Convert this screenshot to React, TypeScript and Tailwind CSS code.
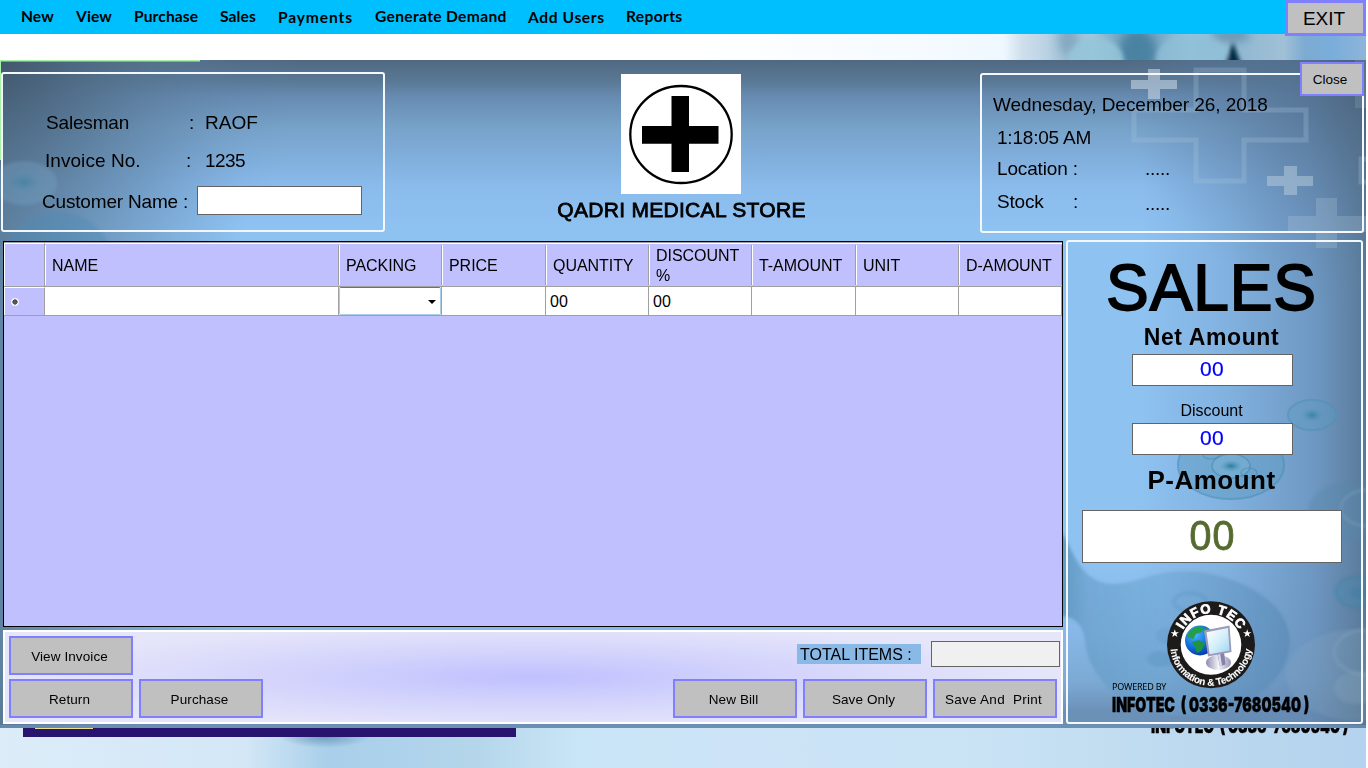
import React from "react";

const MENU = [
  { label: "New", cls: "w-[55px]" },
  { label: "View", cls: "w-[58px]" },
  { label: "Purchase", cls: "w-[86px]" },
  { label: "Sales", cls: "w-[58px]" },
  { label: "Payments", cls: "w-[97px] pt-px tracking-[0.85px]" },
  { label: "Generate Demand", cls: "w-[153px] tracking-[0.33px]" },
  { label: "Add Users", cls: "w-[98px] pt-px tracking-[0.6px]" },
  { label: "Reports", cls: "w-[90px] tracking-[0.35px]" },
];

const COLUMNS = [
  { label: "NAME", width: "w-[294px]", value: "" },
  { label: "PACKING", width: "w-[103px]", value: "", combo: true },
  { label: "PRICE", width: "w-[104px]", value: "" },
  { label: "QUANTITY", width: "w-[103px]", value: "00" },
  { label: "DISCOUNT %", width: "w-[103px]", value: "00" },
  { label: "T-AMOUNT", width: "w-[104px]", value: "" },
  { label: "UNIT", width: "w-[103px]", value: "" },
  { label: "D-AMOUNT", width: "w-[103px]", value: "" },
];

function Btn({ children, className = "" }: { children: React.ReactNode; className?: string }) {
  return (
    <button
      className={`flex h-[39px] w-[124px] shrink-0 items-center justify-center whitespace-pre border-2 border-[#8080ff] bg-[#c0c0c0] pt-[3px] pr-[3px] text-[13.5px] leading-none tracking-[0.1px] text-black ${className}`}
    >
      {children}
    </button>
  );
}

function PhotoStrip() {
  return (
    <svg className="block h-[26px] w-full" viewBox="0 0 1366 26" preserveAspectRatio="none">
      <defs>
        <linearGradient id="strip" x1="0" x2="1">
          <stop offset="0" stopColor="#ffffff" />
          <stop offset="0.5" stopColor="#ffffff" />
          <stop offset="0.7" stopColor="#f3faff" />
          <stop offset="0.735" stopColor="#eef8fe" />
          <stop offset="0.748" stopColor="#cfdfec" />
          <stop offset="0.765" stopColor="#bcd3e5" />
          <stop offset="0.78" stopColor="#9dbdd2" />
          <stop offset="0.8" stopColor="#a4c6da" />
          <stop offset="0.822" stopColor="#6f9fbc" />
          <stop offset="0.845" stopColor="#74a3c0" />
          <stop offset="0.87" stopColor="#9cc6dc" />
          <stop offset="0.91" stopColor="#92b9d2" />
          <stop offset="0.94" stopColor="#a0c0d6" />
          <stop offset="0.955" stopColor="#7cabd2" />
          <stop offset="0.975" stopColor="#79addb" />
          <stop offset="1" stopColor="#8fb4d8" />
        </linearGradient>
        <filter id="soft"><feGaussianBlur stdDeviation="4" /></filter>
        <filter id="soft2"><feGaussianBlur stdDeviation="2" /></filter>
      </defs>
      <rect width="1366" height="26" fill="url(#strip)" />
      <g filter="url(#soft)">
        <ellipse cx="1068" cy="6" rx="10" ry="14" fill="#6b95b2" opacity="0.5" />
        <ellipse cx="1138" cy="18" rx="18" ry="22" fill="#3e7899" opacity="0.75" />
        <ellipse cx="1230" cy="2" rx="20" ry="6" fill="#3f6c8c" opacity="0.5" />
      </g>
      <g filter="url(#soft2)">
        <ellipse cx="1096" cy="28" rx="28" ry="24" fill="#94c5d9" opacity="0.85" />
        <ellipse cx="1192" cy="26" rx="36" ry="27" fill="#8dbfd7" opacity="0.8" />
        <path d="M1233 8 L1241 30 L1225 30 Z" fill="#052f45" />
      </g>
    </svg>
  );
}

function Cell({ cx, cy, rx, ry }: { cx: number; cy: number; rx: number; ry: number }) {
  return (
    <g filter="url(#b1)">
      <ellipse cx={cx} cy={cy} rx={rx} ry={ry} fill="#5d9cc0" opacity="0.35" />
      <ellipse cx={cx} cy={cy} rx={rx - 1} ry={ry - 1} fill="none" stroke="#4b8cb0" strokeWidth="2" opacity="0.4" />
      <ellipse cx={cx} cy={cy} rx={rx * 0.45} ry={ry * 0.45} fill="url(#core)" opacity="0.75" />
    </g>
  );
}

function Backdrop() {
  return (
    <svg className="absolute inset-0 h-full w-full" viewBox="0 60 1366 668" preserveAspectRatio="none">
      <defs>
        <linearGradient id="sky" x1="0" x2="0" y1="0" y2="1">
          <stop offset="0" stopColor="#506982" />
          <stop offset="0.03" stopColor="#597793" />
          <stop offset="0.055" stopColor="#678bb1" />
          <stop offset="0.1" stopColor="#77a2c8" />
          <stop offset="0.14" stopColor="#7fadd9" />
          <stop offset="0.19" stopColor="#8abbec" />
          <stop offset="0.25" stopColor="#8ec2f1" />
          <stop offset="0.75" stopColor="#8ec2f1" />
          <stop offset="0.86" stopColor="#87b7e6" />
          <stop offset="0.93" stopColor="#7caad5" />
          <stop offset="0.975" stopColor="#6c91b8" />
          <stop offset="1" stopColor="#6b8fb4" />
        </linearGradient>
        <linearGradient id="rightShade" x1="0" x2="1">
          <stop offset="0" stopColor="#6288b8" stopOpacity="0" />
          <stop offset="0.4" stopColor="#6288b4" stopOpacity="0.3" />
          <stop offset="0.75" stopColor="#6288b2" stopOpacity="0.7" />
          <stop offset="1" stopColor="#54728e" stopOpacity="0.9" />
        </linearGradient>
        <linearGradient id="leftEdge" x1="0" x2="1">
          <stop offset="0" stopColor="#557690" />
          <stop offset="1" stopColor="#6a93ba" stopOpacity="0" />
        </linearGradient>
        <radialGradient id="corner" gradientUnits="userSpaceOnUse" cx="0" cy="60" r="300">
          <stop offset="0" stopColor="#3a4b60" stopOpacity="0.7" />
          <stop offset="0.45" stopColor="#4b6680" stopOpacity="0.35" />
          <stop offset="1" stopColor="#6288b8" stopOpacity="0" />
        </radialGradient>
        <radialGradient id="corner2" gradientUnits="userSpaceOnUse" cx="1366" cy="60" r="250">
          <stop offset="0" stopColor="#415468" stopOpacity="0.65" />
          <stop offset="1" stopColor="#5b7da0" stopOpacity="0" />
        </radialGradient>
        <radialGradient id="core">
          <stop offset="0" stopColor="#237699" stopOpacity="0.9" />
          <stop offset="1" stopColor="#4a93b5" stopOpacity="0" />
        </radialGradient>
        <linearGradient id="blob" x1="0" x2="1">
          <stop offset="0" stopColor="#4e86aa" stopOpacity="0.7" />
          <stop offset="0.12" stopColor="#5f98c2" stopOpacity="0.55" />
          <stop offset="0.45" stopColor="#6aa3cf" stopOpacity="0.5" />
          <stop offset="1" stopColor="#5284b0" stopOpacity="0.5" />
        </linearGradient>
        <filter id="b1"><feGaussianBlur stdDeviation="0.7" /></filter>
        <filter id="b2"><feGaussianBlur stdDeviation="1.6" /></filter>
      </defs>
      <rect y="60" width="1366" height="668" fill="url(#sky)" />
      <rect x="0" y="60" width="240" height="668" fill="url(#leftEdge)" opacity="0.8" />
      <rect x="1140" y="60" width="226" height="668" fill="url(#rightShade)" />
      <rect y="60" width="320" height="310" fill="url(#corner)" />
      <rect x="1100" y="60" width="266" height="260" fill="url(#corner2)" />

      <g filter="url(#b2)">
        <ellipse cx="24" cy="183" rx="33" ry="22" fill="#7ea9cc" opacity="0.3" />
        <ellipse cx="24" cy="182" rx="19" ry="11" fill="url(#core)" opacity="0.5" />
        <ellipse cx="58" cy="266" rx="56" ry="54" fill="#4c8ab2" opacity="0.38" />
      </g>

      <g fill="none" stroke="#a9c6dd" strokeWidth="5" opacity="0.27" filter="url(#b1)">
        <path d="M1196 70 H1244 V110 H1306 V140 H1244 V181 H1196 V140 H1134 V110 H1196 Z" />
        <path d="M1366 159 H1361 V182 H1366" />
      </g>
      <g fill="#c4d4e2" filter="url(#b1)">
        <path opacity="0.6" d="M1148 69 H1160 V80 H1177 V89 H1160 V99 H1148 V89 H1131 V80 H1148 Z" />
        <path opacity="0.45" d="M1284 166 H1297 V176 H1313 V186 H1297 V195 H1284 V186 H1267 V176 H1284 Z" />
        <path opacity="0.22" d="M1316 198 H1337 V216 H1366 V232 H1337 V248 H1316 V232 H1288 V216 H1316 Z" />
        <rect x="1355" y="60" width="11" height="48" opacity="0.15" />
      </g>

      <g filter="url(#b2)">
        <path
          d="M1060 530 C1074 550 1080 585 1115 584 C1145 582 1155 568 1200 572 C1245 578 1290 605 1290 640 C1290 690 1230 720 1170 715 C1110 705 1086 668 1085 640 C1083 625 1075 616 1060 616 Z"
          fill="url(#blob)"
        />
        <ellipse cx="1346" cy="512" rx="38" ry="29" fill="#5286aa" opacity="0.35" />
        <ellipse cx="1368" cy="508" rx="27" ry="18" fill="none" stroke="#83abc8" strokeWidth="3" opacity="0.3" />
        <ellipse cx="1356" cy="592" rx="20" ry="15" fill="#4388ae" fillOpacity="0.3" stroke="#317d9f" strokeOpacity="0.3" strokeWidth="3" />
        <ellipse cx="1360" cy="593" rx="10" ry="6" fill="#347c9e" opacity="0.3" />
        <ellipse cx="1358" cy="675" rx="72" ry="46" fill="#91aec4" opacity="0.2" />
        <ellipse cx="1365" cy="652" rx="31" ry="22" fill="none" stroke="#8eabc1" strokeWidth="3" opacity="0.3" />
        <ellipse cx="1356" cy="688" rx="22" ry="16" fill="#8eabc1" opacity="0.25" />
        <ellipse cx="1190" cy="602" rx="16" ry="9" fill="none" stroke="#568fb8" strokeWidth="3" opacity="0.35" />
        <ellipse cx="1160" cy="659" rx="13" ry="8" fill="#4f8cb7" opacity="0.3" />
        <ellipse cx="1166" cy="636" rx="10" ry="8" fill="#4f8cb7" opacity="0.2" />
      </g>
      <Cell cx={1312} cy={415} rx={25} ry={16} />
      <g filter="url(#b1)">
        <ellipse cx="1231" cy="465" rx="54" ry="35" fill="#5b9bc2" opacity="0.5" />
        <ellipse cx="1231" cy="465" rx="53" ry="34" fill="none" stroke="#4587ad" strokeWidth="2" opacity="0.35" />
        <ellipse cx="1231" cy="466" rx="19" ry="12" fill="#79b0d2" stroke="#4388ab" strokeWidth="1.5" opacity="0.5" />
        <ellipse cx="1231" cy="466" rx="11" ry="6" fill="url(#core)" />
        <ellipse cx="1211" cy="455" rx="8" ry="4" fill="none" stroke="#4388ab" strokeWidth="1.2" opacity="0.6" />
        <ellipse cx="1249" cy="473" rx="8" ry="5" fill="none" stroke="#4388ab" strokeWidth="1.2" opacity="0.6" />
      </g>
      <path d="M0 160 V60.5 H200" fill="none" stroke="#a6f3a6" strokeWidth="2" />
      <rect y="725" width="1366" height="3" fill="#6c8fb3" opacity="0.7" />
    </svg>
  );
}

function StoreLogo() {
  return (
    <svg className="block h-[120px] w-[120px]" viewBox="0 0 120 120">
      <rect width="120" height="120" fill="#fff" />
      <ellipse cx="60" cy="60.5" rx="50.7" ry="48.5" fill="none" stroke="#000" strokeWidth="2.3" />
      <path d="M50.5 22 H68 V52 H97.5 V69.7 H68 V98 H50.5 V69.7 H21 V52 H50.5 Z" fill="#000" />
    </svg>
  );
}

function InfoTecLogo() {
  return (
    <svg className="block h-[88px] w-[88px]" viewBox="0 0 88 88">
      <defs>
        <path id="arcTop" d="M12.2 44 A31.8 31.8 0 0 1 75.8 44" />
        <path id="arcBottom" d="M3.3 44 A40.7 40.7 0 0 0 84.7 44" />
        <radialGradient id="globe" cx="0.35" cy="0.3" r="0.8">
          <stop offset="0" stopColor="#4fb4ff" />
          <stop offset="0.55" stopColor="#0d6fd8" />
          <stop offset="1" stopColor="#062a9c" />
        </radialGradient>
        <linearGradient id="screen" x1="0" y1="0" x2="1" y2="1">
          <stop offset="0" stopColor="#ffffff" />
          <stop offset="0.5" stopColor="#d6f0fa" />
          <stop offset="1" stopColor="#9cd6ef" />
        </linearGradient>
        <linearGradient id="stand" x1="0" x2="1">
          <stop offset="0" stopColor="#8e8cab" />
          <stop offset="0.5" stopColor="#f3f3fa" />
          <stop offset="1" stopColor="#9795b5" />
        </linearGradient>
      </defs>
      <ellipse cx="44" cy="43.7" rx="44" ry="43.5" fill="#1d1a1a" />
      <ellipse cx="44" cy="43.7" rx="30.3" ry="30" fill="#fff" />
      <circle cx="33" cy="39.5" r="15" fill="url(#globe)" />
      <path d="M22 31 Q28 24 36 26 L35 31 L29 33 L26 38 L20 36 Z" fill="#23a045" />
      <path d="M25 41 L32 39 L38 43 L34 50 L30 52 L28 46 Z" fill="#1f9440" />
      <path d="M36 29 L40 27 L43 30 L38 33 Z" fill="#23a045" />
      <ellipse cx="51.5" cy="61.5" rx="12.5" ry="7.5" fill="url(#stand)" />
      <path d="M50 52 L57 51 L58.5 63.5 L53 65 Z" fill="#8583a6" />
      <path d="M50.5 52 L53 52 L55 64.5 L53 64.8 Z" fill="#dddced" />
      <path d="M37 29.5 L62.5 24.5 L64.5 51 L41 55.5 Z" fill="#9d9abb" />
      <path d="M39.5 31.3 L61 27 L62.5 49.5 L42.7 53.2 Z" fill="url(#screen)" />
      <g fill="#fff" stroke="#fff" fontFamily="'Liberation Sans', sans-serif" fontWeight="700" textAnchor="middle">
        <text fontSize="13.2" strokeWidth="0.7">
          <textPath href="#arcTop" startOffset="50%" textLength="68">INFO TEC</textPath>
        </text>
        <text fontSize="9.9" strokeWidth="0.1">
          <textPath href="#arcBottom" startOffset="50%" textLength="119">Information &amp; Technology</textPath>
        </text>
      </g>
      <g fill="#fff">
        <path id="star" d="M7.8 28.2 L8.8 31.2 L12 31.2 L9.4 33 L10.4 36 L7.8 34.2 L5.2 36 L6.2 33 L3.6 31.2 L6.8 31.2 Z" />
        <use href="#star" x="72.4" />
      </g>
    </svg>
  );
}

function Contact() {
  return (
    <div className="h-[18px] w-[197px] whitespace-pre">
      <span className="inline-block origin-left scale-x-[0.693] font-['Inter','Roboto',sans-serif] text-[20.5px] leading-[18px] font-black [-webkit-text-stroke:0.4px_#000]">
        INFOTEC  ( 0336-7680540 )
      </span>
    </div>
  );
}

function Header() {
  return (
    <header className="flex h-[34px] shrink-0 bg-[#00bfff]">
      <nav className="flex flex-1 pt-[6px] pl-[21px] font-['Lato','Open_Sans',sans-serif] text-[15.6px] leading-[20px] font-bold tracking-[0.1px] text-black">
        {MENU.map((m) => (
          <span key={m.label} className={`shrink-0 whitespace-nowrap ${m.cls}`}>{m.label}</span>
        ))}
      </nav>
      <button className="relative z-10 h-[36px] w-[81px] shrink-0 border-[3px] border-[#8080ff] bg-[#c0c0c0] pr-[3px] text-[19px] leading-none">
        EXIT
      </button>
    </header>
  );
}

function SalesmanBox() {
  return (
    <section className="mt-[12px] ml-px h-[160px] w-[384px] rounded-[3px] border-2 border-[#f4f8fc] text-[19px] leading-[22px] tracking-[-0.18px]">
      <div className="mt-[38px] flex pl-[43px]">
        <span className="w-[143px]">Salesman</span>
        <span className="w-[16px]">:</span>
        <span className="tracking-[0px]">RAOF</span>
      </div>
      <div className="mt-[16px] flex pl-[42px]">
        <span className="w-[141px] tracking-[0.05px]">Invoice No.</span>
        <span className="w-[19px]">:</span>
        <span className="tracking-[-0.6px]">1235</span>
      </div>
      <div className="mt-[14px] flex items-center pl-[39px]">
        <span className="w-[155px] pt-[3px] whitespace-nowrap">Customer Name :</span>
        <input className="h-[29px] w-[165px] border border-[#646464] bg-white" />
      </div>
    </section>
  );
}

function InfoBox() {
  return (
    <section className="mt-[13px] h-[160px] w-[384px] rounded-[3px] border-2 border-[#f4f8fc] pl-[15px] text-[19px] leading-[22px] tracking-[-0.04px]">
      <div className="mt-[19px] -ml-[4px] whitespace-nowrap">Wednesday, December 26, 2018</div>
      <div className="mt-[11px] tracking-[-0.2px]">1:18:05 AM</div>
      <div className="mt-[9px] flex">
        <span className="w-[148px] tracking-[-0.15px]">Location :</span>
        <span className="tracking-[-0.3px]">.....</span>
      </div>
      <div className="mt-[11px] flex">
        <span className="w-[76px] tracking-[-0.2px]">Stock</span>
        <span className="w-[72px]">:</span>
        <span className="pt-[2px] tracking-[-0.3px]">.....</span>
      </div>
    </section>
  );
}

function Grid() {
  return (
    <section className="h-[386px] w-[1060px] overflow-hidden border border-black bg-[#c0c0ff] text-[16px] leading-[20px]">
      <div className="flex h-[45px] border-t border-b border-[#a0a0a0]">
        <div className="w-[41px] shrink-0 border-t border-r border-l border-t-white border-r-[#a0a0a0] border-l-white" />
        {COLUMNS.map((c) => (
          <div key={c.label} className={`shrink-0 border-t border-t-white pt-px pb-px ${c.width}`}>
            <div className="flex h-full items-center border-r border-l border-r-[#a0a0a0] border-l-white pt-[2px] pl-[6px] tracking-[-0.05px]">
              {c.label}
            </div>
          </div>
        ))}
      </div>
      <div className="flex h-[29px] border-b border-[#a0a0a0]">
        <div className="flex w-[41px] shrink-0 items-center border-t border-r border-l border-t-white border-r-[#a0a0a0] border-l-white pl-[6px]">
          <svg className="h-[8px] w-[8px]" viewBox="0 0 8 8">
            <circle cx="4" cy="4" r="4" fill="#f0f0fa" />
            <circle cx="4" cy="4" r="2.4" fill="#404040" />
            <path d="M4 1 V7 M1 4 H7" stroke="#606060" strokeWidth="1" />
          </svg>
        </div>
        {COLUMNS.map((c) => (
          <div key={c.label} className={`flex shrink-0 items-center border-r border-[#a0a0a0] bg-white ${c.width}`}>
            {c.combo ? (
              <div className="flex h-full w-full items-center justify-end rounded-[2px] border border-[#a9cfe8] border-t-[#3d7fa8] pt-px pr-[4px]">
                <svg className="h-[4px] w-[8px]" viewBox="0 0 8 4"><path d="M0 0 H8 L4 4 Z" fill="#000" /></svg>
              </div>
            ) : (
              <span className="pt-[2px] pl-[4px]">{c.value}</span>
            )}
          </div>
        ))}
      </div>
    </section>
  );
}

function ActionBar() {
  return (
    <section className="mt-[3px] flex h-[94px] w-[1060px] justify-between border-2 border-white bg-[radial-gradient(ellipse_50%_60%_at_50%_50%,#c0c0ff_0%,#cfcffd_35%,#dedefb_75%,#e6e6fa_100%)] pt-[4px] pr-px pl-[4px]">
      <div className="flex flex-col gap-[4px]">
        <Btn>View Invoice</Btn>
        <div className="flex gap-[6px]">
          <Btn>Return</Btn>
          <Btn>Purchase</Btn>
        </div>
      </div>
      <div className="flex flex-col">
        <div className="flex h-[43px] justify-end pt-[5px]">
          <div className="mt-[3px] h-[20px] w-[124px] bg-[#89b9e6] pl-[3px] text-[16px] leading-[21px] tracking-[0px] whitespace-nowrap">TOTAL ITEMS :</div>
          <div className="ml-[10px] h-[26px] w-[129px] border border-[#646464] bg-[#f0f0f0]" />
        </div>
        <div className="flex gap-[6px] pr-[3px]">
          <Btn>New Bill</Btn>
          <Btn>Save Only</Btn>
          <Btn className="tracking-[0.25px]">Save And  Print</Btn>
        </div>
      </div>
    </section>
  );
}

function SalesPanel() {
  return (
    <aside className="flex h-[484px] w-[297px] flex-col items-center rounded-[3px] border-2 border-[#f4f8fc] pr-[5px]">
      <h1 className="mt-[13px] pr-px text-[64px] leading-[66px] tracking-[0.9px] [-webkit-text-stroke:1.8px_#000]">SALES</h1>
      <div className="mt-[4px] pr-px text-[23px] leading-[24px] font-bold tracking-[0.6px]">Net Amount</div>
      <div className="mt-[5px] h-[32px] w-[161px] border border-[#646464] bg-white text-center text-[21px] leading-[28px] tracking-[0.3px] text-[#0000ff] [-webkit-text-stroke:0.2px_#0000ff]">00</div>
      <div className="mt-[15px] pr-px text-[16px] leading-[20px]">Discount</div>
      <div className="mt-[2px] h-[32px] w-[161px] border border-[#646464] bg-white text-center text-[21px] leading-[28px] tracking-[0.3px] text-[#0000ff] [-webkit-text-stroke:0.2px_#0000ff]">00</div>
      <div className="mt-[10px] pr-px text-[26px] leading-[30px] font-bold tracking-[0.5px]">P-Amount</div>
      <div className="mt-[15px] h-[53px] w-[260px] border border-[#646464] bg-white text-center font-['Noto_Sans',sans-serif] text-[40px] leading-[47px] text-[#556b2f] [-webkit-text-stroke:0.8px_#556b2f]">00</div>
      <div className="mt-[38px] flex w-full items-end pl-[44px]">
        <span className="-mb-[2px] w-[55px] font-['Noto_Sans',sans-serif] text-[9px] leading-[8px] tracking-[-0.2px] whitespace-nowrap">POWERED BY</span>
        <InfoTecLogo />
      </div>
      <div className="mt-[6px] w-full pl-[44px]"><Contact /></div>
    </aside>
  );
}

function BottomStrip() {
  return (
    <footer className="relative flex h-[40px] shrink-0 items-start justify-between overflow-hidden bg-[linear-gradient(90deg,#dcecf9_0%,#d3e7f6_18%,#a9cfea_24%,#add2eb_29%,#b5d6ea_35%,#c8e5f6_42%,#cde3f7_55%,#c9e3f5_72%,#c3def1_80%,#b9d6ef_92%,#b5d3ee_100%)]">
      <div className="absolute top-[4px] left-[280px] h-[20px] w-[90px] bg-[radial-gradient(ellipse_50%_60%_at_50%_20%,#6c9abb_0%,transparent_100%)]" />
      <div className="relative ml-[23px] h-[9px] w-[493px] bg-[#28146e]">
        <div className="ml-[12px] h-px w-[58px] bg-[#f0e090]" />
      </div>
      <div className="mt-[-12px] mr-[18px]"><Contact /></div>
    </footer>
  );
}

export default function App() {
  return (
    <div className="flex h-[768px] w-[1366px] flex-col overflow-hidden bg-white font-['Liberation_Sans',Arial,sans-serif] text-black">
      <Header />
      <PhotoStrip />
      <main className="relative h-[668px] shrink-0">
        <Backdrop />
        <div className="relative flex h-[180px] justify-between pr-[2px]">
          <SalesmanBox />
          <div className="flex flex-col items-center pt-[14px] pr-[3px]">
            <StoreLogo />
            <div className="mt-[4px] pl-px text-[21px] leading-[24px] tracking-[0.3px] whitespace-nowrap [-webkit-text-stroke:0.8px_#000]">QADRI MEDICAL STORE</div>
          </div>
          <InfoBox />
        </div>
        <div className="relative flex justify-between pr-[3px] pl-[3px]">
          <div className="flex flex-col pt-px">
            <Grid />
            <ActionBar />
          </div>
          <SalesPanel />
        </div>
        <button className="absolute top-[2px] right-[2px] h-[34px] w-[64px] border-2 border-[#8080ff] bg-[#c0c0c0] pt-[2px] pr-1 text-[13.5px] leading-none">Close</button>
      </main>
      <BottomStrip />
    </div>
  );
}
